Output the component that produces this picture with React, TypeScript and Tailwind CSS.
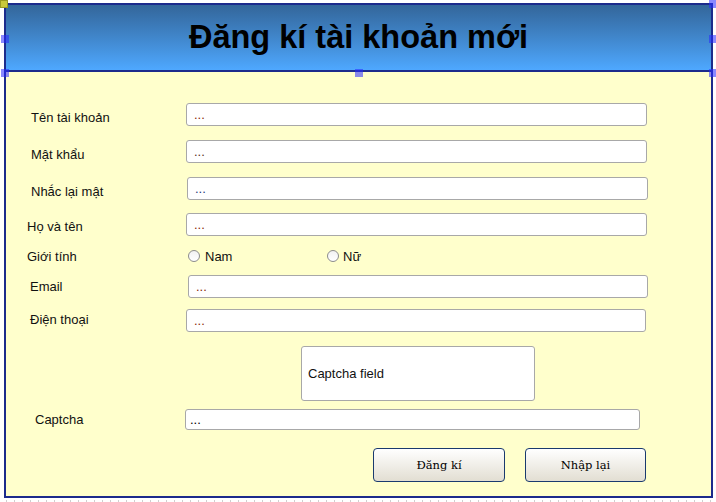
import React from "react";

const sans = { fontFamily: '"Liberation Sans", Arial, sans-serif' };

function Dots({ color }: { color: string }) {
  return (
    <span className="pl-[7px] text-[13px] leading-[15px]" style={{ color }}>
      ...
    </span>
  );
}

function Handle({ cls }: { cls: string }) {
  return <div className={"absolute w-[8px] h-[8px] bg-[rgba(40,40,255,0.55)] " + cls} />;
}

export default function App() {
  return (
    <div className="relative w-[716px] h-[502px] bg-white overflow-hidden" style={sans}>
      <div className="pt-[3px] pl-[4px]">
        <div className="w-[709px] h-[495px] border-2 border-[#1c2b8c] flex flex-col">
          {/* header */}
          <div className="h-[67px] shrink-0 border-b-2 border-[#1c2b8c] bg-gradient-to-b from-[#33669a] to-[#4ea8ff] flex items-center justify-center">
            <h1 className="text-[32.5px] leading-none font-bold text-black">Đăng kí tài khoản mới</h1>
          </div>
          {/* body */}
          <div className="flex-1 bg-[#ffffcc] text-[13px] leading-[15px] text-[#111]">
            {/* row 1 */}
            <div className="mt-[31px] flex items-start h-[23px]">
              <div className="w-[180px] shrink-0 pl-[25px] mt-[7px]">Tên tài khoản</div>
              <div className="w-[461px] h-[23px] bg-white border border-[#a8a8a8] rounded-[3px] flex items-center">
                <Dots color="#8a2a08" />
              </div>
            </div>
            {/* row 2 */}
            <div className="mt-[14px] flex items-start h-[23px]">
              <div className="w-[180px] shrink-0 pl-[25px] mt-[7px]">Mật khẩu</div>
              <div className="w-[461px] h-[23px] bg-white border border-[#a8a8a8] rounded-[3px] flex items-center">
                <Dots color="#5a3020" />
              </div>
            </div>
            {/* row 3 */}
            <div className="mt-[14px] flex items-start h-[23px]">
              <div className="w-[181px] shrink-0 pl-[25px] mt-[7px]">Nhắc lại mật</div>
              <div className="w-[461px] h-[23px] bg-white border border-[#a8a8a8] rounded-[3px] flex items-center">
                <Dots color="#1f3a7a" />
              </div>
            </div>
            {/* row 4 */}
            <div className="mt-[13px] flex items-start h-[23px]">
              <div className="w-[180px] shrink-0 pl-[21px] mt-[6px]">Họ và tên</div>
              <div className="w-[461px] h-[23px] bg-white border border-[#a8a8a8] rounded-[3px] flex items-center">
                <Dots color="#8a2a08" />
              </div>
            </div>
            {/* gender */}
            <div className="mt-[12px] flex items-start h-[16px]">
              <div className="w-[182px] shrink-0 pl-[21px] mt-[1px]">Giới tính</div>
              <div className="w-[139px] shrink-0 flex items-center h-[16px] gap-[5px]">
                <span className="w-[12px] h-[12px] rounded-full border border-[#8c8c8c] bg-gradient-to-b from-[#f2f2f2] to-white" />
                <span className="mt-[1px]">Nam</span>
              </div>
              <div className="flex items-center h-[16px] gap-[4px]">
                <span className="w-[12px] h-[12px] rounded-full border border-[#8c8c8c] bg-gradient-to-b from-[#f2f2f2] to-white" />
                <span className="mt-[1px]">Nữ</span>
              </div>
            </div>
            {/* email */}
            <div className="mt-[11px] flex items-start h-[23px]">
              <div className="w-[182px] shrink-0 pl-[24px] mt-[4px]">Email</div>
              <div className="w-[460px] h-[23px] bg-white border border-[#a8a8a8] rounded-[3px] flex items-center">
                <Dots color="#8a2a08" />
              </div>
            </div>
            {/* phone */}
            <div className="mt-[11px] flex items-start h-[23px]">
              <div className="w-[180px] shrink-0 pl-[24px] mt-[3px]">Điện thoại</div>
              <div className="w-[460px] h-[23px] bg-white border border-[#a8a8a8] rounded-[3px] flex items-center">
                <Dots color="#8a2a08" />
              </div>
            </div>
            {/* captcha field */}
            <div className="mt-[14px] flex h-[55px]">
              <div className="ml-[295px] w-[234px] h-[55px] bg-white border border-[#a8a8a8] rounded-[3px] flex items-center pl-[6px]">
                Captcha field
              </div>
            </div>
            {/* captcha */}
            <div className="mt-[8px] flex items-start h-[21px]">
              <div className="w-[179px] shrink-0 pl-[29px] mt-[3px]">Captcha</div>
              <div className="w-[455px] h-[21px] bg-white border border-[#a8a8a8] rounded-[3px] flex items-center">
                <span className="pl-[4px] text-black">...</span>
              </div>
            </div>
            {/* buttons */}
            <div
              className="mt-[18px] flex h-[34px] gap-[20px] pl-[367px] text-[11.5px] text-black"
              style={{ fontFamily: '"DejaVu Serif", serif' }}
            >
              <button className="w-[132px] h-[34px] border border-[#1a3a6e] rounded-[4px] bg-gradient-to-b from-[#ffffff] to-[#e2ded2]">
                Đăng kí
              </button>
              <button className="w-[121px] h-[34px] border border-[#1a3a6e] rounded-[4px] bg-gradient-to-b from-[#ffffff] to-[#e2ded2]">
                Nhập lại
              </button>
            </div>
          </div>
        </div>
        <div className="mt-[2px] ml-[2px] w-[709px] h-[2px] bg-[repeating-linear-gradient(90deg,#cfcfcf_0px,#cfcfcf_1px,transparent_1px,transparent_8px)]" />
      </div>

      {/* selection handles */}
      <div className="absolute left-0 top-0 w-[8px] h-[8px] bg-[#c8c83a] border border-[#9a9a20]" />
      <Handle cls="left-[1px] top-[35px]" />
      <Handle cls="left-[1px] top-[69px]" />
      <Handle cls="left-[355px] top-[69px]" />
      <Handle cls="left-[709px] top-0" />
      <Handle cls="left-[709px] top-[35px]" />
      <Handle cls="left-[709px] top-[69px]" />
    </div>
  );
}
